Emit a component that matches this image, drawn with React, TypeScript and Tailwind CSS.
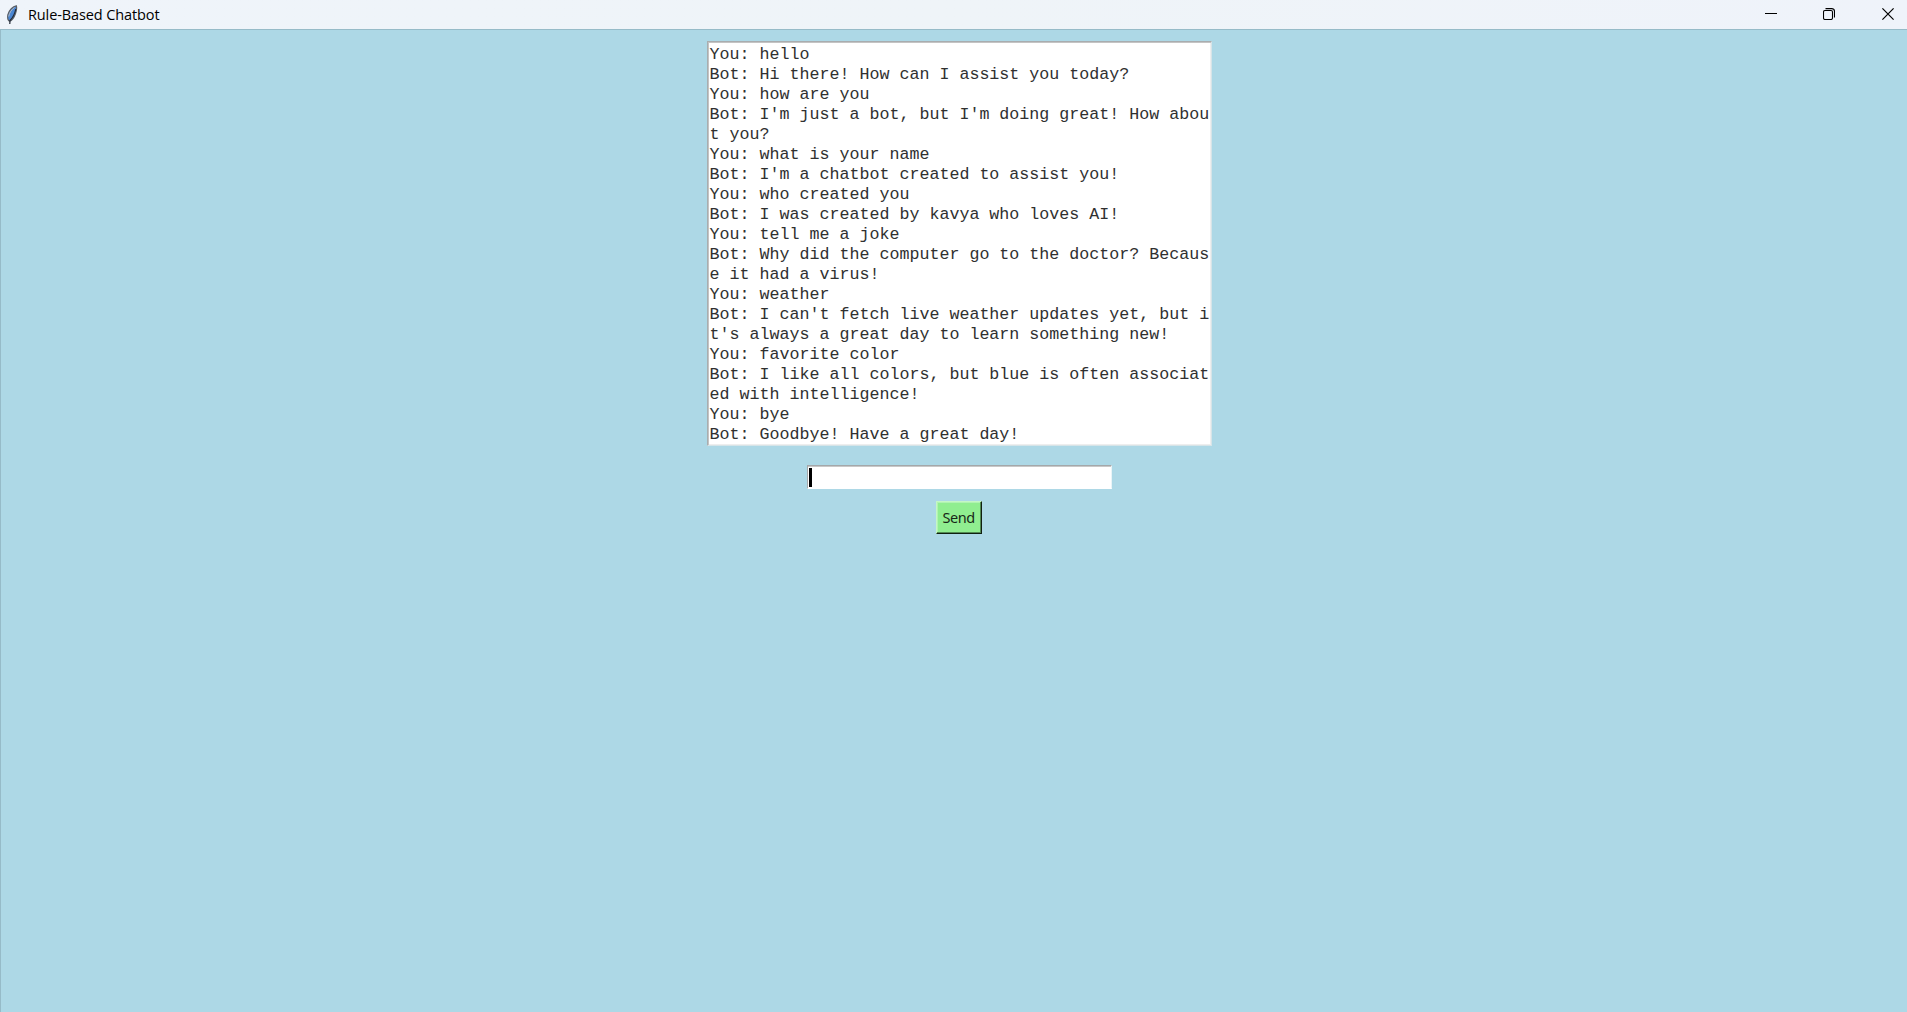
const lines = [
  "You: hello",
  "Bot: Hi there! How can I assist you today?",
  "You: how are you",
  "Bot: I'm just a bot, but I'm doing great! How abou",
  "t you?",
  "You: what is your name",
  "Bot: I'm a chatbot created to assist you!",
  "You: who created you",
  "Bot: I was created by kavya who loves AI!",
  "You: tell me a joke",
  "Bot: Why did the computer go to the doctor? Becaus",
  "e it had a virus!",
  "You: weather",
  "Bot: I can't fetch live weather updates yet, but i",
  "t's always a great day to learn something new!",
  "You: favorite color",
  "Bot: I like all colors, but blue is often associat",
  "ed with intelligence!",
  "You: bye",
  "Bot: Goodbye! Have a great day!",
];

function Feather() {
  return (
    <svg className="ml-[6px] h-5 w-[12px] shrink-0" viewBox="0 0 12 20" fill="none">
      <path d="M10.300 .8C7 1.500 3 5 1.800 10c-.5 3 .2 5.300 1.700 6.200C6 15.500 8.300 12 9.500 8.500 10.500 5.500 11 2.500 10.300.8Z" fill="#4a86d2" stroke="#5a5f66" strokeWidth="1.200" />
      <path d="M8.500 2.500C5.500 4.500 3.500 7.500 2.700 11.500" stroke="#b4bcc6" strokeWidth="1" />
      <path d="M9.800 4C9 8 7 12.500 4 15.500L3.800 19" stroke="#222a36" strokeWidth="1.200" />
    </svg>
  );
}

export default function App() {
  return (
    <div className="flex h-screen flex-col overflow-hidden bg-[#add8e6]">
      <header className="flex h-[29px] shrink-0 items-center bg-linear-to-r from-[#eff4fa] via-[#eff4f8] to-[#eff3fa]">
        <Feather />
        <h1 className="ml-[10px] whitespace-nowrap font-['Open_Sans','Noto_Sans',sans-serif] text-[14.5px] leading-[20px] tracking-[-0.11px] text-black">Rule-Based Chatbot</h1>
        <div className="ml-auto flex h-full items-center text-black">
          <button aria-label="Minimize" className="flex h-full w-[58px] items-center justify-center">
            <svg className="-mt-px" width="12" height="12" viewBox="0 0 12 12" shapeRendering="crispEdges"><path d="M0 5h12v1H0z" fill="currentColor" /></svg>
          </button>
          <button aria-label="Restore" className="flex h-full w-[58px] items-center justify-center">
            <svg className="-mt-px" width="12" height="12" viewBox="0 0 12 12" fill="none" stroke="currentColor" strokeWidth="1.100"><rect x=".5" y="2.500" width="9" height="9" rx="1.500" /><path d="M2.500.6h6.200q2.800 0 2.800 2.800v6" /></svg>
          </button>
          <button aria-label="Close" className="mr-[13px] ml-[24px] flex h-full w-[12px] items-center justify-center">
            <svg className="-mt-px" width="12" height="12" viewBox="0 0 12 12" fill="none" stroke="currentColor" strokeWidth="1.200"><path d="m.4.4 11.200 11.200M11.600.4.4 11.600" /></svg>
          </button>
        </div>
      </header>
      <main className="flex flex-1 flex-col items-center border-t border-l border-[#96bbc8] pl-[10px]">
        <div className="mt-[11px] h-[405px] w-[505px] shrink-0 border border-t-[#a9adaf] border-r-[#d6e4e8] border-b-[#d6e4e8] border-l-[#a9adaf] bg-white pt-[3px] pl-[2px] font-['Liberation_Mono',monospace] text-[16.663px] leading-[20px] text-[#303030] shadow-[inset_1px_1px_0_#c4c4c4,inset_-1px_-1px_0_#eeeeee]">
          {lines.map((line) => (
            <p key={line} className="h-5 whitespace-pre">{line}</p>
          ))}
        </div>
        <div className="mt-[19px] ml-px flex h-[24px] w-[305px] shrink-0 items-center border border-t-[#a4a8aa] border-r-[#e9f4f7] border-b-white border-l-[#a4a8aa] bg-white shadow-[inset_0_1px_0_#c8c8c8]">
          <div className="ml-px h-[19px] w-[3px] bg-black" />
        </div>
        <div className="mt-[12px] mr-px h-[33px] w-[46px] shrink-0">
          <button className="flex h-full w-full items-center justify-center border border-t-[#c5f7c5] border-r-[#102010] border-b-[#102010] border-l-[#c5f7c5] bg-[#90ee90] pb-[2px] font-['Noto_Sans','Open_Sans',sans-serif] text-[14.5px] leading-5 tracking-[-0.450px] text-[#182818] shadow-[inset_-1px_-1px_0_#528a52,inset_1px_1px_0_#b0f4b0]">Send</button>
        </div>
      </main>
    </div>
  );
}
